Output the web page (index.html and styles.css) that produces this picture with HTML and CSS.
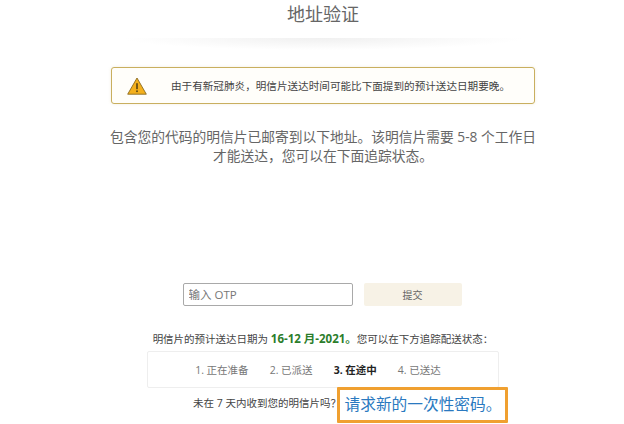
FILE: index.html
```html
<!DOCTYPE html>
<html lang="zh">
<head>
<meta charset="utf-8">
<title>地址验证</title>
<link rel="stylesheet" href="styles.css">
</head>
<body>
<main class="page">
  <h1 class="title">地址验证</h1>
  <div class="divider"></div>
  <div class="alert">
    <svg class="alert-icon" viewBox="0 0 20 18" width="20" height="18" aria-hidden="true">
      <path d="M10 1 L19.3 17.2 H0.7 Z" fill="#f4b01c" stroke="#8a6a1e" stroke-width="0.9" stroke-linejoin="round"/>
      <rect x="9.2" y="6.2" width="1.6" height="6" fill="#5a4310"/>
      <rect x="9.2" y="13.4" width="1.6" height="1.7" fill="#5a4310"/>
    </svg>
    <span class="alert-text">由于有新冠肺炎，明信片送达时间可能比下面提到的预计送达日期要晚。</span>
  </div>
  <p class="lead">包含您的代码的明信片已邮寄到以下地址。该明信片需要 5-8 个工作日才能送达，您可以在下面追踪状态。</p>
  <form class="otp">
    <input class="otp-input" type="text" placeholder="输入 OTP">
    <button class="otp-button" type="button">提交</button>
  </form>
  <p class="eta">明信片的预计送达日期为 <strong class="eta-date">16-12 月-2021。</strong>您可以在下方追踪配送状态：</p>
  <ol class="steps">
    <li>1. 正在准备</li>
    <li>2. 已派送</li>
    <li class="current">3. 在途中</li>
    <li>4. 已送达</li>
  </ol>
  <div class="resend">
    <span>未在 7 天内收到您的明信片吗？</span>
    <a class="resend-link" href="#">请求新的一次性密码。</a>
  </div>
</main>
</body>
</html>
```
FILE: styles.css
```css
* { box-sizing: border-box; }
html, body { margin: 0; padding: 0; background: #fff; }
body {
  width: 624px;
  height: 424px;
  overflow: hidden;
  font-family: "Open Sans", "Noto Sans CJK SC", sans-serif;
  color: #555;
}
.page {
  position: relative;
  height: 424px;
  padding-left: 22px;
  display: flex;
  flex-direction: column;
  align-items: center;
}
.title {
  margin: 1px 0 0;
  height: 26px;
  line-height: 26px;
  font-size: 18px;
  font-weight: 400;
  color: #666;
}
.divider {
  width: 400px;
  height: 12px;
  margin-top: 11px;
  background: radial-gradient(ellipse 50% 100% at 50% 0, #f0f0f0 0, rgba(255,255,255,0) 100%);
}
.alert {
  width: 424px;
  height: 37px;
  margin-top: 17px;
  display: flex;
  align-items: center;
  padding-left: 15px;
  background: #fffefa;
  border: 1px solid #c9af5f;
  border-radius: 3px;
  box-shadow: 0 0 3px rgba(200,180,120,.25);
}
.alert-icon { flex: none; }
.alert-text {
  margin-left: 24px;
  font-size: 10.6px;
  color: #444;
  white-space: nowrap;
}
.lead {
  width: 428px;
  margin: 23px 0 0;
  font-size: 13.75px;
  line-height: 19px;
  text-align: center;
  color: #666;
}
.otp {
  display: flex;
  gap: 11px;
  margin-top: 118px;
  margin-right: 2px;
  align-items: center;
}
.otp-input {
  width: 170px;
  height: 23px;
  padding: 0 5px;
  border: 1px solid #a9a9a9;
  border-radius: 2px;
  font: 11.5px "Open Sans", "Noto Sans CJK SC", sans-serif;
  color: #555;
}
.otp-input::placeholder { color: #777; opacity: 1; }
.otp-button {
  width: 98px;
  height: 23px;
  border: 0;
  border-radius: 2px;
  background: #f7f2e6;
  font: 10px "Open Sans", "Noto Sans CJK SC", sans-serif;
  color: #666;
}
.eta {
  margin: 25px 0 0;
  font-size: 10.5px;
  line-height: 16px;
  color: #444;
  white-space: nowrap;
}
.eta-date { color: #2b7d2b; font-size: 11.5px; }
.steps {
  list-style: none;
  width: 352px;
  height: 37px;
  margin: 4px 0 0;
  padding: 0 10px 0 0;
  display: flex;
  justify-content: center;
  align-items: center;
  gap: 21px;
  border: 1px solid #eee;
  border-radius: 2px;
  font-size: 10.5px;
  color: #777;
}
.steps .current { font-weight: 700; color: #222; }
.resend {
  align-self: flex-start;
  margin-top: 7px;
  padding-left: 171px;
  font-size: 10.5px;
  line-height: 16px;
  color: #444;
  white-space: nowrap;
}
.resend-link {
  position: absolute;
  left: 337px;
  top: 387px;
  width: 171px;
  height: 36px;
  padding: 0 0 3px 1px;
  display: flex;
  align-items: center;
  justify-content: center;
  background: #fff;
  border: 3px solid #f0a030;
  border-radius: 1px;
  font-size: 15.7px;
  color: #2a79c0;
  text-decoration: none;
}
```
